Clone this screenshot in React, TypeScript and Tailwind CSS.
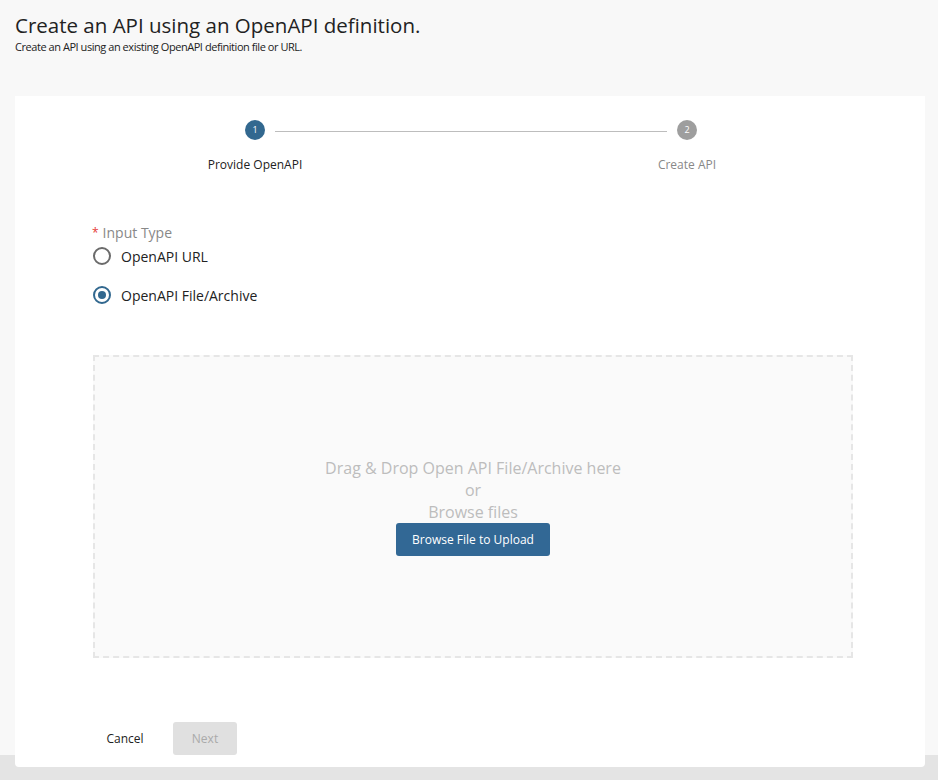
export default function App() {
  return (
    <div className="w-[938px] h-[780px] bg-[#f8f8f8] relative overflow-hidden" style={{ fontFamily: '"Open Sans", sans-serif' }}>
      <div className="absolute left-0 right-0 top-[755px] bottom-0 bg-[#e4e4e4]" />
      <div className="relative pl-[15px] pr-[13px] pt-[10px]">
        <h1 className="text-[20.5px] leading-[30px] text-[#222]">Create an API using an OpenAPI definition.</h1>
        <p className="text-[11px] leading-[14px] text-[#222] tracking-[-0.45px]">Create an API using an existing OpenAPI definition file or URL.</p>
        <div className="mt-[42px] h-[671px] bg-white rounded-b-[4px] flex flex-col">
          <div className="relative h-[90px]">
            <div className="absolute left-[260px] top-[35px] w-[392px] h-px bg-[#bdbdbd]" />
            <div className="absolute left-[230px] top-[24px] w-[20px] h-[20px] rounded-full bg-[#32688f] text-white text-[9px] flex items-center justify-center">1</div>
            <div className="absolute left-[662px] top-[24px] w-[20px] h-[20px] rounded-full bg-[#9e9e9e] text-white text-[9px] flex items-center justify-center">2</div>
            <div className="absolute left-[140px] w-[200px] top-[60px] text-center text-[12px] text-[#222]">Provide OpenAPI</div>
            <div className="absolute left-[572px] w-[200px] top-[60px] text-center text-[12px] text-[#888]">Create API</div>
          </div>
          <div className="px-[77px] pt-[37px]">
            <div className="text-[14px] text-[#888] leading-[20px]"><span className="text-[#e53935] text-[12px] align-top mr-[4px]">*</span>Input Type</div>
            <div className="flex items-center gap-[10px] ml-[1px] mt-[3px] h-[20px]">
              <div className="w-[18px] h-[18px] rounded-full border-2 border-[#6b6b6b]" />
              <span className="text-[14px] text-[#222]">OpenAPI URL</span>
            </div>
            <div className="flex items-center gap-[10px] ml-[1px] mt-[19px] h-[20px]">
              <div className="w-[18px] h-[18px] rounded-full border-2 border-[#32688f] flex items-center justify-center"><div className="w-[8px] h-[8px] rounded-full bg-[#32688f]" /></div>
              <span className="text-[14px] text-[#222]">OpenAPI File/Archive</span>
            </div>
            <div className="mt-[50px] ml-[1px] h-[303px] w-[760px] border-2 border-dashed border-[#e6e6e6] bg-[#fafafa] flex flex-col items-center pt-[100px]">
              <div className="text-[16px] leading-[22px] text-[#bdbdbd] text-center">Drag &amp; Drop Open API File/Archive here<br />or<br />Browse files</div>
              <button className="mt-[0px] w-[154px] h-[33px] bg-[#326895] text-white text-[12px] rounded-[3px]">Browse File to Upload</button>
            </div>
          </div>
          <div className="flex items-center px-[77px] mt-[64px] gap-[15px]">
            <button className="w-[66px] h-[33px] text-[12px] text-[#222]">Cancel</button>
            <button className="w-[64px] h-[33px] text-[12px] text-[#aaa] bg-[#e0e0e0] rounded-[3px]">Next</button>
          </div>
        </div>
      </div>
    </div>
  );
}
